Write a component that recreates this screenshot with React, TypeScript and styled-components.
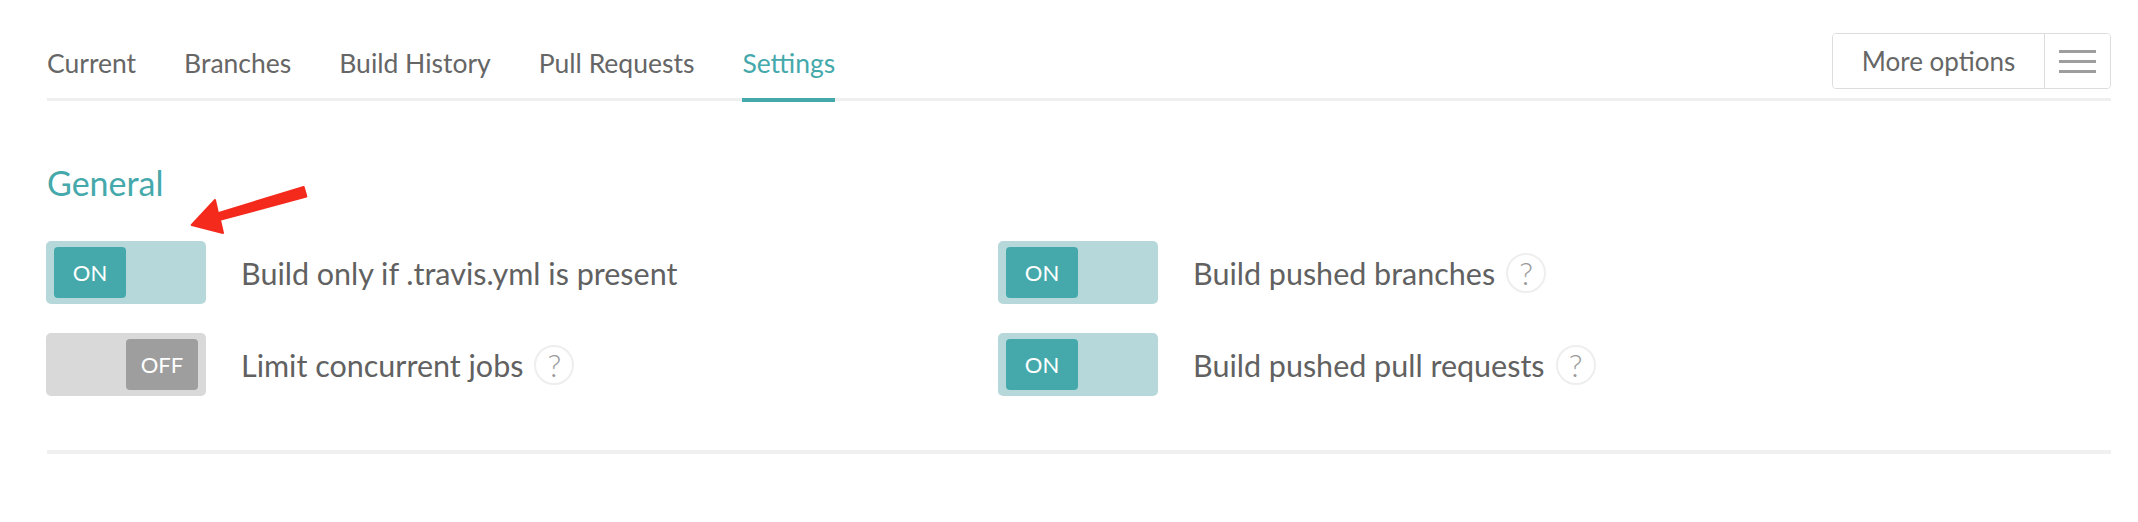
import React from "react";
import styled, { createGlobalStyle } from "styled-components";

const GlobalStyle = createGlobalStyle`
  html, body { margin: 0; padding: 0; background: #ffffff; }
  body { font-family: Lato, "Liberation Sans", sans-serif; color: #666666; }
  * { box-sizing: border-box; }
`;

const TEAL = "#45a9ab";

const Page = styled.div`
  position: relative;
  padding: 0 27px 0 47px;
`;

const Header = styled.header`
  display: flex;
  justify-content: space-between;
  align-items: flex-end;
  height: 101px;
  border-bottom: 3px solid #efefef;
`;

const Tabs = styled.nav`
  display: flex;
  gap: 48px;
  align-items: flex-end;
`;

const Tab = styled.a<{ $active?: boolean }>`
  display: block;
  font-size: 26.5px;
  line-height: 30px;
  padding-bottom: 20px;
  margin-bottom: -4px;
  border-bottom: 4px solid ${(p) => (p.$active ? TEAL : "transparent")};
  color: ${(p) => (p.$active ? TEAL : "#666666")};
  text-decoration: none;
  cursor: pointer;
`;

const MoreOptions = styled.div`
  display: flex;
  height: 56px;
  margin-bottom: 9px;
  border: 1px solid #dddddd;
  border-radius: 4px;
  overflow: hidden;
`;

const MoreLabel = styled.button`
  border: none;
  background: #fff;
  width: 211px;
  font-family: inherit;
  font-size: 26px;
  color: #666666;
  padding: 0;
`;

const MenuButton = styled.button`
  border: none;
  border-left: 1px solid #dddddd;
  background: #fff;
  width: 66px;
  display: flex;
  flex-direction: column;
  align-items: center;
  justify-content: center;
  gap: 7px;
  padding: 0;
`;

const MenuLine = styled.span`
  display: block;
  width: 37px;
  height: 3px;
  background: #9e9e9e;
`;

const Section = styled.section`
  padding: 62px 0 54px;
  border-bottom: 4px solid #f0f0f0;
`;

const Heading = styled.h2`
  margin: 0 0 38px;
  font-size: 34px;
  line-height: 40px;
  font-weight: 400;
  color: ${TEAL};
`;

const Grid = styled.div`
  display: grid;
  grid-template-columns: 952px 1fr;
  row-gap: 29px;
  margin-left: -1px;
`;

const Item = styled.div`
  display: flex;
  align-items: center;
`;

const Track = styled.div<{ $on: boolean }>`
  width: 160px;
  height: 63px;
  border-radius: 5px;
  padding: 6px 8px 6px 8px;
  display: flex;
  justify-content: ${(p) => (p.$on ? "flex-start" : "flex-end")};
  background: ${(p) => (p.$on ? "#b7d8db" : "#d9d9d9")};
  margin-right: 35px;
  flex-shrink: 0;
`;

const Knob = styled.div<{ $on: boolean }>`
  width: 72px;
  height: 51px;
  border-radius: 4px;
  background: ${(p) => (p.$on ? TEAL : "#9e9e9e")};
  color: #ffffff;
  display: flex;
  align-items: center;
  justify-content: center;
  font-size: 22px;
`;

const Label = styled.span`
  font-size: 30.5px;
  color: #616161;
`;

const Help = styled.span`
  display: inline-flex;
  align-items: center;
  justify-content: center;
  width: 40px;
  height: 40px;
  margin-left: 11px;
  border: 2px solid #eeeeee;
  border-radius: 50%;
  color: #9a9a9a;
  font-size: 32px;
  font-weight: 300;
  line-height: 1;
`;

const Arrow = styled.svg`
  position: absolute;
  left: 180px;
  top: 180px;
  width: 140px;
  height: 70px;
  overflow: visible;
`;

type Setting = { label: string; on: boolean; help?: boolean };

const settings: Setting[] = [
  { label: "Build only if .travis.yml is present", on: true },
  { label: "Build pushed branches", on: true, help: true },
  { label: "Limit concurrent jobs", on: false, help: true },
  { label: "Build pushed pull requests", on: true, help: true },
];

export default function App() {
  return (
    <>
      <GlobalStyle />
      <Page>
        <Header>
          <Tabs>
            <Tab>Current</Tab>
            <Tab>Branches</Tab>
            <Tab>Build History</Tab>
            <Tab>Pull Requests</Tab>
            <Tab $active>Settings</Tab>
          </Tabs>
          <MoreOptions>
            <MoreLabel>More options</MoreLabel>
            <MenuButton aria-label="menu">
              <MenuLine />
              <MenuLine />
              <MenuLine />
            </MenuButton>
          </MoreOptions>
        </Header>
        <Section>
          <Heading>General</Heading>
          <Grid>
            {settings.map((s) => (
              <Item key={s.label}>
                <Track $on={s.on}>
                  <Knob $on={s.on}>{s.on ? "ON" : "OFF"}</Knob>
                </Track>
                <Label>{s.label}</Label>
                {s.help && <Help>?</Help>}
              </Item>
            ))}
          </Grid>
        </Section>
        <Arrow viewBox="0 0 140 70">
          <polygon
            points="11.7,45 35,20 38,33.1 123.6,6.9 126.4,16.5 40,39.9 43,53"
            fill="#f42a1d"
            stroke="#f42a1d"
            strokeWidth="2"
            strokeLinejoin="round"
          />
        </Arrow>
      </Page>
    </>
  );
}
